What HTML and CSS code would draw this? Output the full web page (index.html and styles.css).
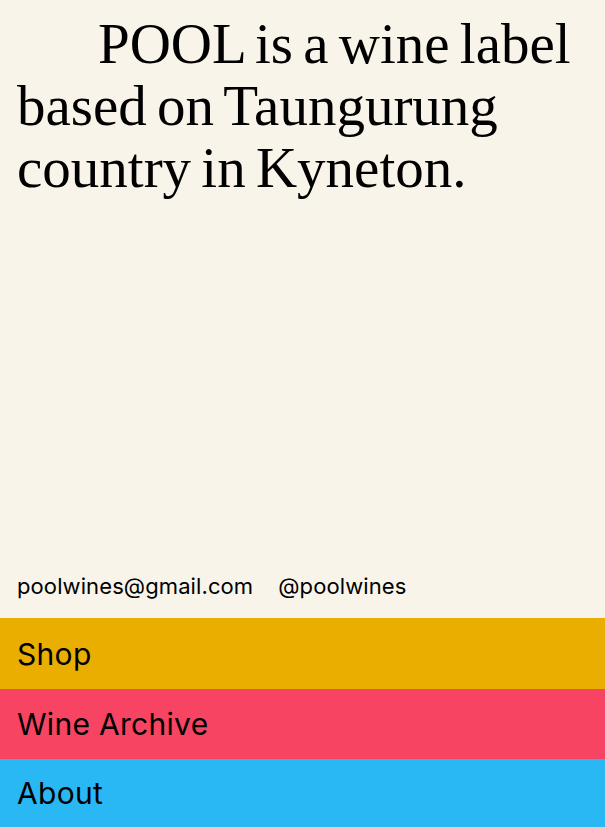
FILE: index.html
```html
<!DOCTYPE html>
<html lang="en">
<head>
<meta charset="utf-8">
<title>POOL Wines</title>
<link rel="stylesheet" href="styles.css">
</head>
<body>
<div class="page">
  <main class="hero">
    <p class="intro">POOL is a wine label based on Taungurung country in Kyneton.</p>
  </main>
  <div class="contact">
    <a class="contact-link" href="#">poolwines@gmail.com</a>
    <a class="contact-link" href="#">@poolwines</a>
  </div>
  <nav class="nav">
    <a class="nav-item nav-shop" href="#">Shop</a>
    <a class="nav-item nav-archive" href="#">Wine Archive</a>
    <a class="nav-item nav-about" href="#">About</a>
  </nav>
</div>
</body>
</html>
```

FILE: styles.css
```css
* { box-sizing: border-box; }
html, body { margin: 0; padding: 0; }
body {
  background: #f8f4ea;
  color: #000;
  font-family: "Inter", "Liberation Sans", sans-serif;
}
.page {
  height: 827px;
  display: flex;
  flex-direction: column;
  overflow: hidden;
}
.hero {
  flex: 1;
  padding: 13px 17px 0;
}
.intro {
  margin: 0;
  font-family: "Liberation Serif", serif;
  font-size: 57px;
  line-height: 62px;
  text-indent: 81px;
  word-spacing: -4px;
}
.contact {
  display: flex;
  gap: 25px;
  padding: 0 17px 17px;
}
.contact-link {
  color: #000;
  text-decoration: none;
  font-size: 22px;
  line-height: 30px;
  letter-spacing: 0.1px;
}
.nav {
  display: flex;
  flex-direction: column;
}
.nav-item {
  display: flex;
  align-items: center;
  height: 70px;
  padding: 0 17px;
  color: #000;
  text-decoration: none;
  font-size: 30px;
  letter-spacing: 0.3px;
}
.nav-shop { background: #e9ae00; height: 71px; }
.nav-archive { background: #f74462; }
.nav-about { background: #29b8f3; height: 68px; }
```
